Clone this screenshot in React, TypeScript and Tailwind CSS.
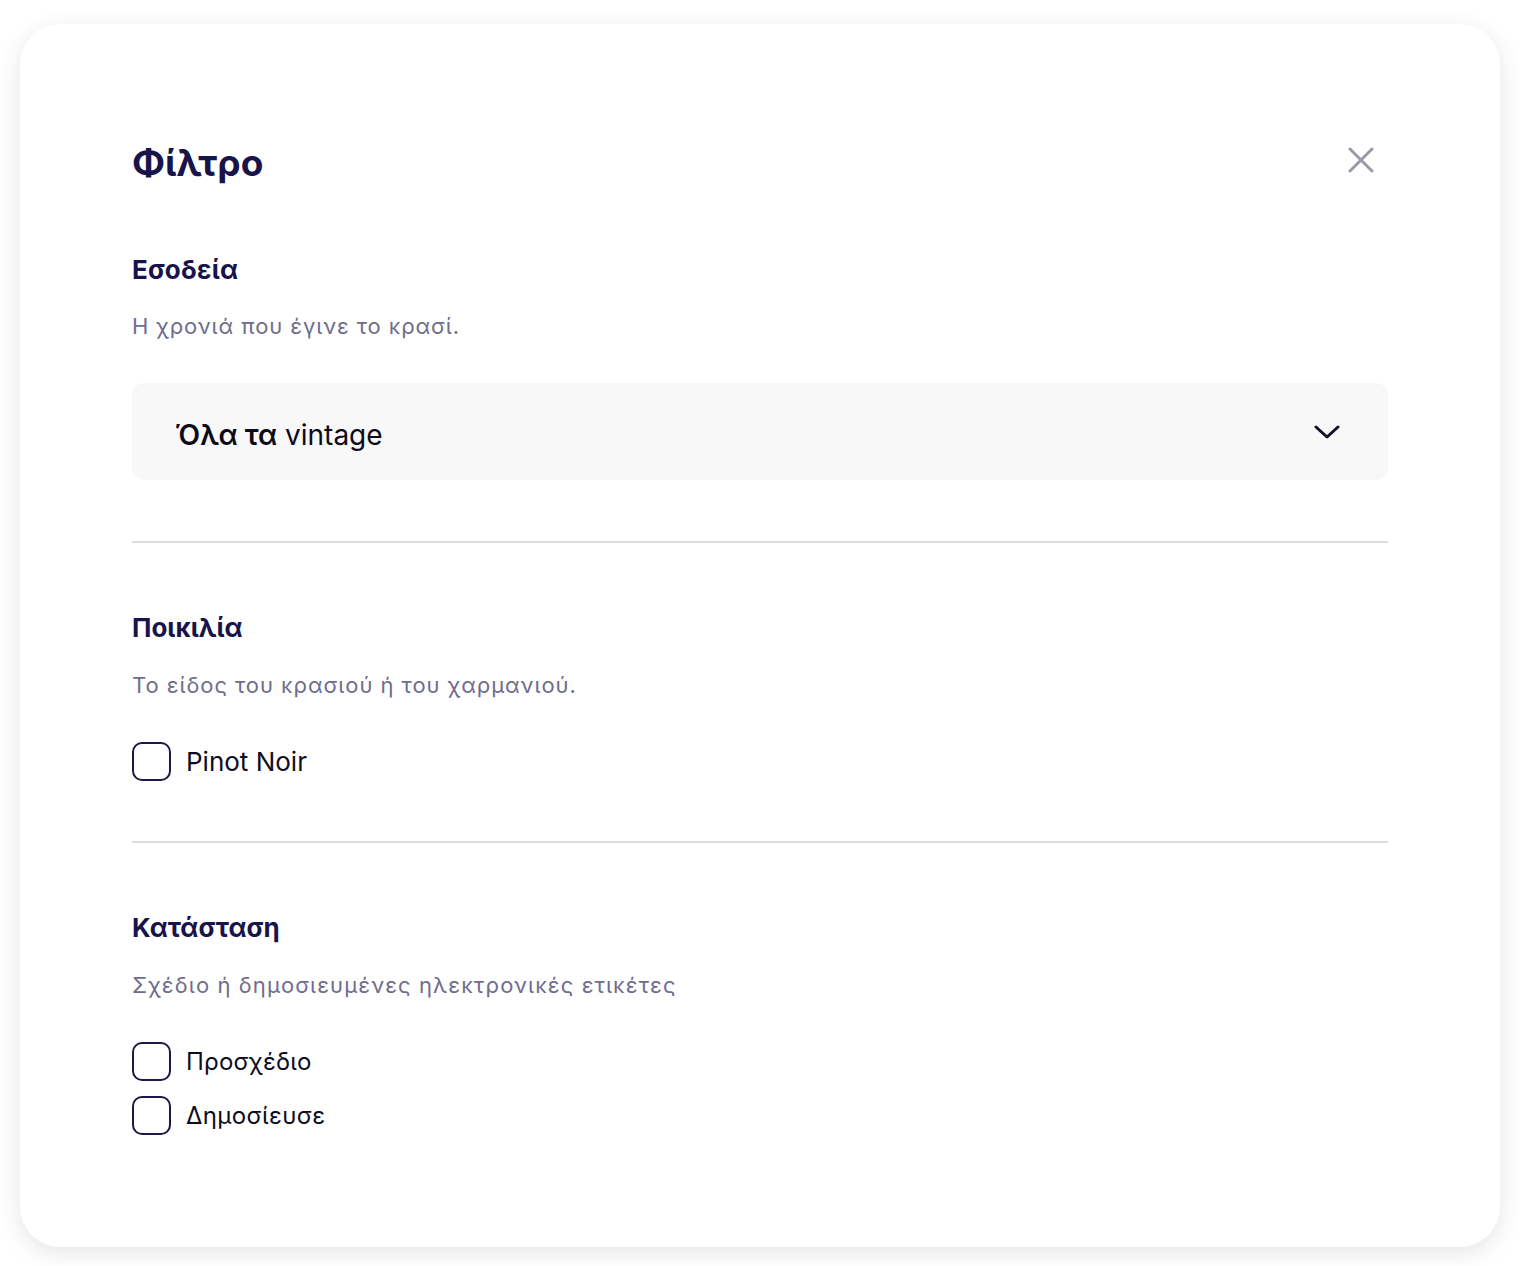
export default function App() {
  return (
    <div className="min-h-[1266px] bg-white px-[20px] pt-[24px] pb-[20px] font-['Inter','Noto_Sans',sans-serif]">
      <div className="rounded-[40px] bg-white px-[112px] pt-[116px] pb-[112px] shadow-[0_6px_24px_rgba(0,0,0,0.10)]">
        <div className="flex items-center justify-between">
          <h1 className="text-[37px] leading-[46px] font-bold text-[#18144a]">Φίλτρο</h1>
          <button className="mr-[14px] mb-[6px] text-[#9b99a8]" aria-label="close">
            <svg width="26" height="26" viewBox="0 0 26 26" fill="none" stroke="currentColor" strokeWidth="3" strokeLinecap="round">
              <path d="M2 2L24 24M24 2L2 24" />
            </svg>
          </button>
        </div>

        <h2 className="mt-[68px] text-[26px] leading-[32px] font-bold tracking-[0.3px] text-[#18144a]">Εσοδεία</h2>
        <p className="mt-[25px] text-[22px] leading-[30px] tracking-[0.9px] text-[#6f6d8f]">Η χρονιά που έγινε το κρασί.</p>
        <div className="mt-[42px] flex h-[97px] items-center justify-between rounded-[12px] bg-[#f8f8f8] pl-[43px] pr-[48px]">
          <span className="mt-[6px] text-[28px] leading-[34px] text-[#0b0b1a]">
            <span className="font-semibold">Όλα τα</span> vintage
          </span>
          <svg width="26" height="16" viewBox="0 0 26 16" fill="none" stroke="#111126" strokeWidth="3" strokeLinecap="round" strokeLinejoin="round">
            <path d="M2 3L13 13L24 3" />
          </svg>
        </div>

        <div className="mt-[61px] h-[2px] bg-[#dcdbe0]" />

        <h2 className="mt-[69px] text-[26px] leading-[32px] font-bold text-[#18144a]">Ποικιλία</h2>
        <p className="mt-[26px] text-[22px] leading-[30px] tracking-[0.95px] text-[#6f6d8f]">Το είδος του κρασιού ή του χαρμανιού.</p>
        <label className="mt-[42px] flex items-center gap-[15px]">
          <span className="h-[39px] w-[39px] rounded-[10px] border-2 border-[#1c1848]" />
          <span className="text-[26px] leading-[32px] text-[#0d0d1f]">Pinot Noir</span>
        </label>

        <div className="mt-[60px] h-[2px] bg-[#dcdbe0]" />

        <h2 className="mt-[69px] text-[26px] leading-[32px] font-bold text-[#18144a]">Κατάσταση</h2>
        <p className="mt-[26px] text-[22px] leading-[30px] tracking-[1.1px] text-[#6f6d8f]">Σχέδιο ή δημοσιευμένες ηλεκτρονικές ετικέτες</p>
        <div className="mt-[42px] flex flex-col gap-[15px]">
          <label className="flex items-center gap-[15px]">
            <span className="h-[39px] w-[39px] rounded-[10px] border-2 border-[#1c1848]" />
            <span className="text-[24px] leading-[32px] tracking-[0.2px] text-[#0d0d1f]">Προσχέδιο</span>
          </label>
          <label className="flex items-center gap-[15px]">
            <span className="h-[39px] w-[39px] rounded-[10px] border-2 border-[#1c1848]" />
            <span className="text-[24px] leading-[32px] tracking-[0.4px] text-[#0d0d1f]">Δημοσίευσε</span>
          </label>
        </div>
      </div>
    </div>
  );
}
